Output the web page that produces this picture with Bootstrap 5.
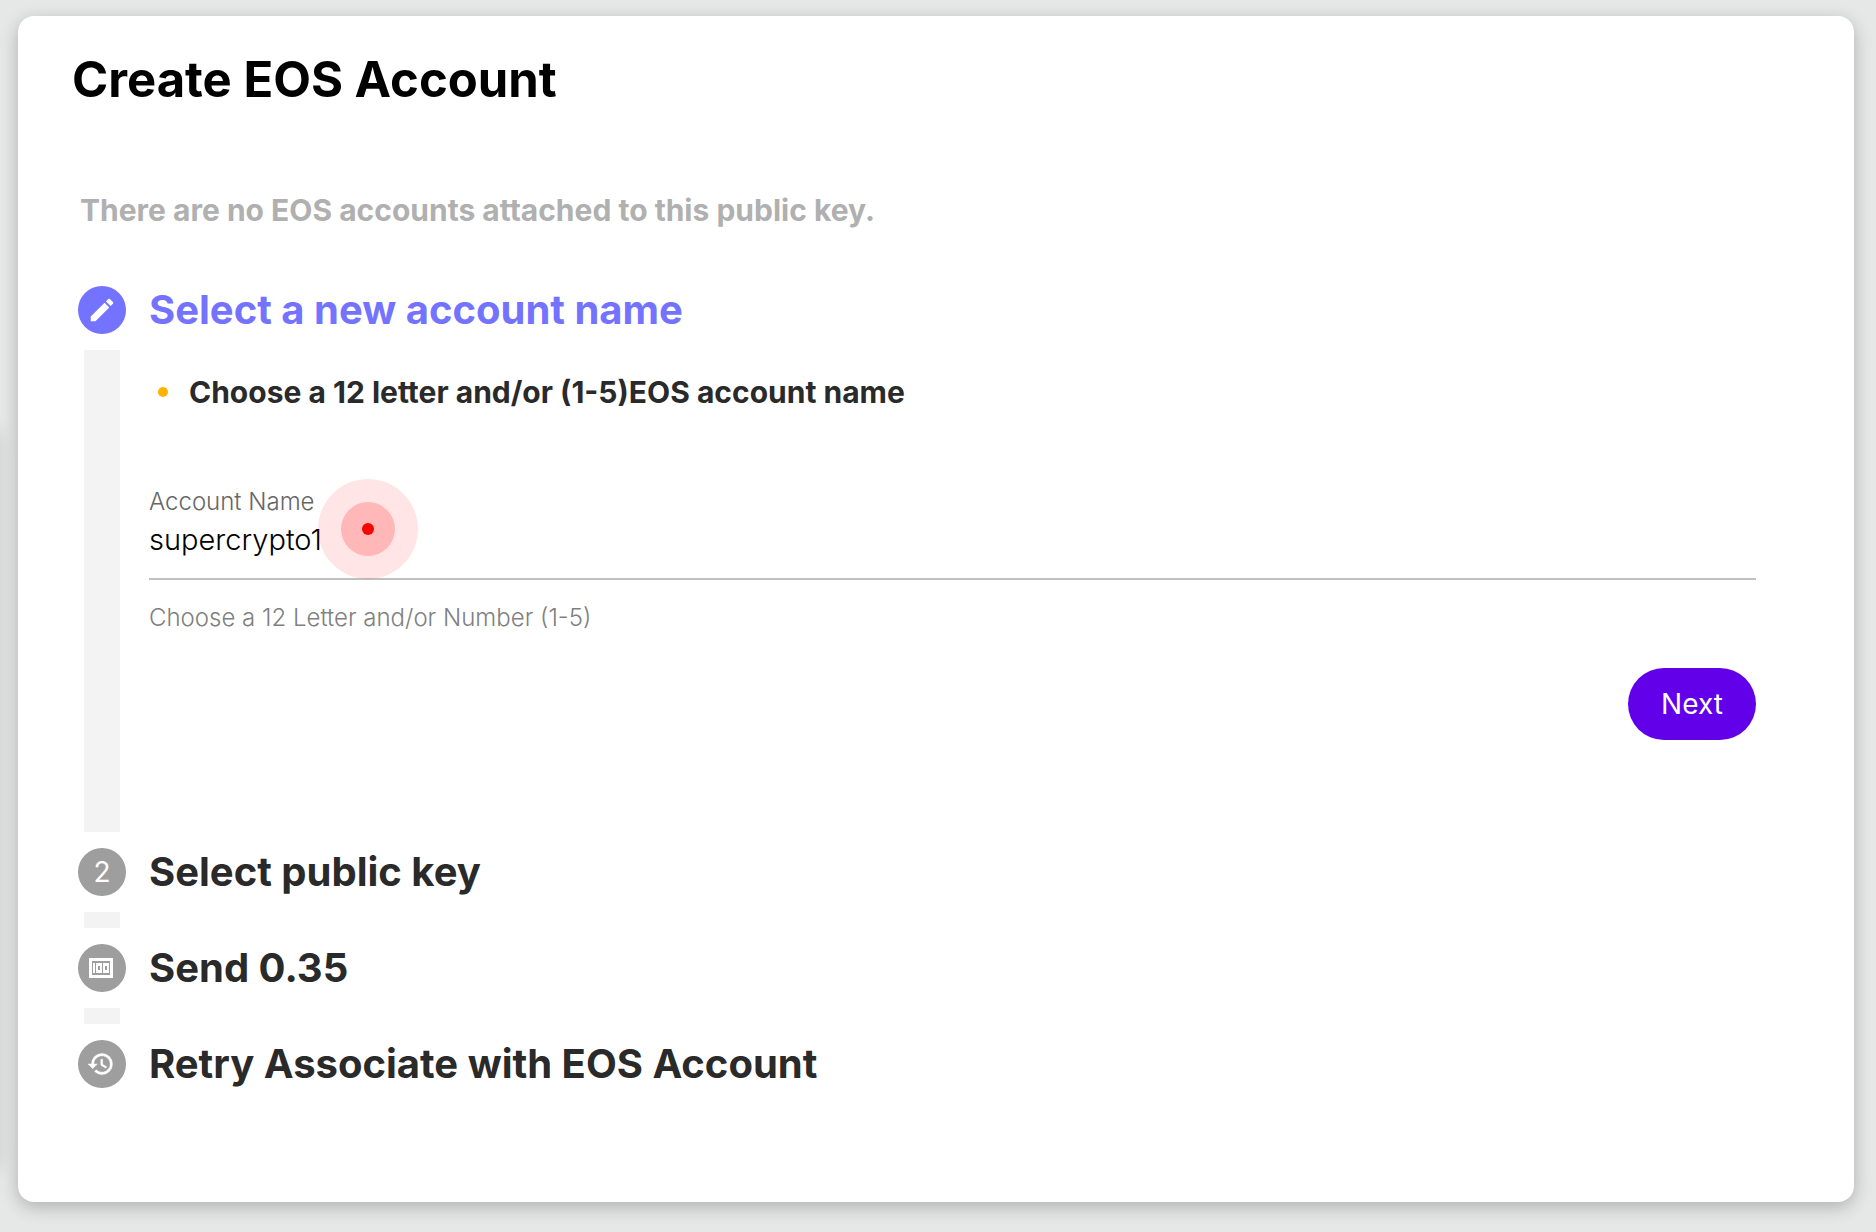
<!DOCTYPE html>
<html lang="en">
<head>
<meta charset="utf-8">
<meta name="viewport" content="width=device-width, initial-scale=1">
<title>Create EOS Account</title>
<link rel="stylesheet" href="https://cdn.jsdelivr.net/npm/bootstrap@5.3.0/dist/css/bootstrap.min.css">
<script src="https://cdn.jsdelivr.net/npm/bootstrap@5.3.0/dist/js/bootstrap.bundle.min.js"></script>
<style>
  body { background: #e6e8e7; color: #2a2a2a; font-family: Inter, "Liberation Sans", sans-serif; }
  .page { padding: 16px 22px 30px 18px; }
  .side-panel { left: -40px; width: 40px; top: 428px; bottom: 68px; box-shadow: 0 4px 18px rgba(0,0,0,.12); }
  .panel { border-radius: 16px; padding: 32px 98px 114px 60px; box-shadow: 0 5px 18px rgba(0,0,0,.24); }
  .panel-title { font-size: 49px; line-height: 64px; font-weight: 650; color: #000; margin: 0 0 74px -6px; }
  .notice { font-size: 30px; line-height: 48px; font-weight: 650; color: #b0b0b0; margin: 0 0 52px 2px; }
  .step { gap: 23px; }
  .rail { width: 48px; gap: 16px; padding-bottom: 16px; }
  .disc { width: 48px; height: 48px; background: #9e9e9e; color: #fff; font-size: 28px; }
  .step-active .disc { background: #7473ff; }
  .bar { width: 36px; min-height: 16px; background: #f3f3f3; }
  .step:last-child .rail { padding-bottom: 0; }
  .step-title { font-size: 40px; line-height: 48px; font-weight: 650; }
  .step-active .step-title { color: #7473ff; }
  .step-body { padding: 38px 0 108px; }
  .hints { font-size: 30px; line-height: 40px; font-weight: 650; margin-bottom: 74px; }
  .hints li { gap: 21px; padding-left: 9px; }
  .hints li::before { content: ""; width: 10px; height: 10px; border-radius: 50%; background: #ffb300; }
  .field-label { font-size: 24px; line-height: 32px; font-weight: 300; color: #666; }
  .field-input { font-size: 29px; line-height: 44px; font-weight: 300; color: #000; border: 0; border-bottom: 2px solid #c0c0c0; padding: 0 0 16px; outline: 0; background: transparent; }
  .field-help { font-size: 24px; line-height: 36px; font-weight: 300; color: #808080; margin: 20px 0 32px; }
  .pulse { left: 169px; top: -7px; width: 100px; height: 100px; background: rgba(255,0,0,.1); pointer-events: none; }
  .pulse-ring { width: 54px; height: 54px; background: rgba(255,0,0,.2); }
  .pulse-dot { width: 12px; height: 12px; background: #f00; }
  .next-btn { width: 128px; height: 72px; font-size: 28px; font-weight: 400; color: #fff; background: #6200ea; border: 0; }
</style>
</head>
<body>
<div class="side-panel position-absolute" aria-hidden="true"></div>
<div class="page">
  <main class="panel bg-white">
    <h1 class="panel-title">Create EOS Account</h1>
    <p class="notice">There are no EOS accounts attached to this public key.</p>

    <section class="step step-active d-flex">
      <div class="rail d-flex flex-column align-items-center flex-shrink-0">
        <div class="disc rounded-circle d-flex align-items-center justify-content-center flex-shrink-0">
          <svg width="30" height="30" viewBox="0 0 24 24" fill="#fff" aria-hidden="true"><path d="M3 17.250V21h3.750L17.810 9.940l-3.750-3.750L3 17.250zM20.710 7.040a1 1 0 0 0 0-1.410l-2.340-2.340a1 1 0 0 0-1.410 0l-1.830 1.830 3.750 3.750 1.830-1.830z"/></svg>
        </div>
        <div class="bar flex-grow-1"></div>
      </div>
      <div class="flex-grow-1">
        <h2 class="step-title mb-0">Select a new account name</h2>
        <form class="step-body" onsubmit="return false">
          <ul class="hints list-unstyled"><li class="d-flex align-items-center">Choose a 12 letter and/or (1-5)EOS account name</li></ul>
          <div class="position-relative">
            <label class="field-label d-block" for="accountName">Account Name</label>
            <input class="field-input d-block w-100" id="accountName" type="text" value="supercrypto1" aria-describedby="accountHelp">
            <div class="pulse position-absolute rounded-circle d-flex align-items-center justify-content-center">
              <div class="pulse-ring rounded-circle d-flex align-items-center justify-content-center"><div class="pulse-dot rounded-circle"></div></div>
            </div>
          </div>
          <p class="field-help" id="accountHelp">Choose a 12 Letter and/or Number (1-5)</p>
          <div class="d-flex justify-content-end"><button class="next-btn rounded-pill" type="submit">Next</button></div>
        </form>
      </div>
    </section>

    <section class="step d-flex">
      <div class="rail d-flex flex-column align-items-center flex-shrink-0">
        <div class="disc rounded-circle d-flex align-items-center justify-content-center">2</div>
        <div class="bar"></div>
      </div>
      <h2 class="step-title mb-0">Select public key</h2>
    </section>

    <section class="step d-flex">
      <div class="rail d-flex flex-column align-items-center flex-shrink-0">
        <div class="disc rounded-circle d-flex align-items-center justify-content-center">
          <svg width="26" height="20" viewBox="0 0 26 20" aria-hidden="true"><path fill="#fff" fill-rule="evenodd" d="M0 0h24v20H0zM3 3v14h18V3zM4 5h2v10H4zM7 5h6v10H7zM9 8v4h2V8zM14 5h6v10h-6zM16 8v4h2V8z"/></svg>
        </div>
        <div class="bar"></div>
      </div>
      <h2 class="step-title mb-0">Send 0.35</h2>
    </section>

    <section class="step d-flex">
      <div class="rail d-flex flex-column align-items-center flex-shrink-0">
        <div class="disc rounded-circle d-flex align-items-center justify-content-center">
          <svg width="28" height="28" viewBox="1 0 24 24" fill="#fff" stroke="#fff" stroke-width=".4" aria-hidden="true"><path d="M13 3a9 9 0 0 0-9 9H1l3.890 3.890.07.14L9 12H6c0-3.870 3.130-7 7-7s7 3.130 7 7-3.130 7-7 7c-1.930 0-3.680-.79-4.940-2.060l-1.420 1.420A8.950 8.950 0 0 0 13 21a9 9 0 0 0 0-18zm-1 5v5l4.280 2.540.72-1.210-3.500-2.080V8H12z"/></svg>
        </div>
      </div>
      <h2 class="step-title mb-0">Retry Associate with EOS Account</h2>
    </section>
  </main>
</div>
</body>
</html>
